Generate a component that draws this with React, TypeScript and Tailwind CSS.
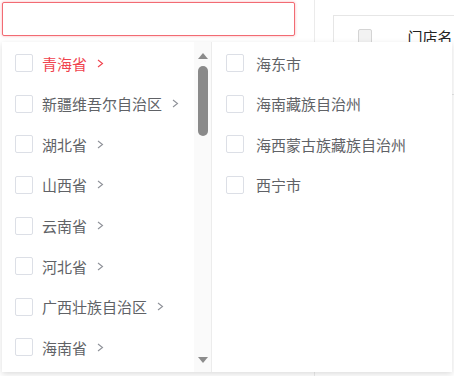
import React from "react";

const provinces = [
  "青海省",
  "新疆维吾尔自治区",
  "湖北省",
  "山西省",
  "云南省",
  "河北省",
  "广西壮族自治区",
  "海南省",
];

const cities = ["海东市", "海南藏族自治州", "海西蒙古族藏族自治州", "西宁市"];

function Box() {
  return <span className="w-[18px] h-[18px] shrink-0 rounded-[2px] border border-[#dcdfe6] bg-white" />;
}

function Chevron({ active }: { active?: boolean }) {
  return (
    <svg width="7" height="9" viewBox="0 0 7 9" className="ml-[10px] shrink-0">
      <path d="M1 1 L5.5 4.5 L1 8" fill="none" stroke={active ? "#f0434e" : "#8f9299"} strokeWidth="1.1" />
    </svg>
  );
}

export default function App() {
  return (
    <div className="relative w-[454px] h-[376px] overflow-hidden bg-white font-['Noto_Sans_CJK_SC',sans-serif]">
      {/* page behind the dropdown */}
      <div className="flex items-start h-full">
        <div className="w-[293px] h-[34px] mt-[2px] ml-[2px] rounded-[2px] border border-[#f26b73] shadow-[0_0_3px_rgba(240,80,90,0.45)] bg-white" />
        <div className="ml-[19px] w-px h-full bg-[#ebebeb]" />
        <div className="ml-[18px] mt-[15px] flex-1 h-[80px] border border-r-0 border-[#e6e6e6] flex items-start pt-[13px] pl-[24px]">
          <span className="w-[18px] h-[18px] rounded-[2px] border border-[#d4d4d4] bg-[#f2f2f2]" />
          <span className="ml-[35px] -mt-[3px] text-[15px] text-[#222]">门店名称</span>
        </div>
      </div>

      {/* dropdown panel */}
      <div className="absolute left-[2px] top-[42px] w-[450px] h-[330px] bg-white shadow-[0_2px_6px_rgba(0,0,0,0.14)] flex">
        <div className="w-[210px] flex border-r border-[#ececec]">
          <div className="flex-1 pt-[1px]">
            {provinces.map((p, i) => (
              <div key={p} className="h-[40.57px] flex items-center pl-[13px]">
                <Box />
                <span className={`ml-[9px] text-[15px] leading-none ${i === 0 ? "text-[#f0434e]" : "text-[#606266]"}`}>{p}</span>
                <Chevron active={i === 0} />
              </div>
            ))}
          </div>
          <div className="w-[17px] bg-[#fafafa] flex flex-col items-center">
            <svg width="10" height="6" viewBox="0 0 10 6" className="mt-[11px]">
              <path d="M0 6 L5 0 L10 6 Z" fill="#8c8c8c" />
            </svg>
            <div className="mt-[7px] w-[10px] h-[70px] rounded-full bg-[#8a8a8a]" />
            <div className="flex-1" />
            <svg width="10" height="6" viewBox="0 0 10 6" className="mb-[9px]">
              <path d="M0 0 L10 0 L5 6 Z" fill="#8c8c8c" />
            </svg>
          </div>
        </div>
        <div className="flex-1 pt-[1px]">
          {cities.map((c) => (
            <div key={c} className="h-[40.57px] flex items-center pl-[14px]">
              <Box />
              <span className="ml-[12px] text-[15px] leading-none text-[#606266]">{c}</span>
            </div>
          ))}
        </div>
      </div>
    </div>
  );
}
